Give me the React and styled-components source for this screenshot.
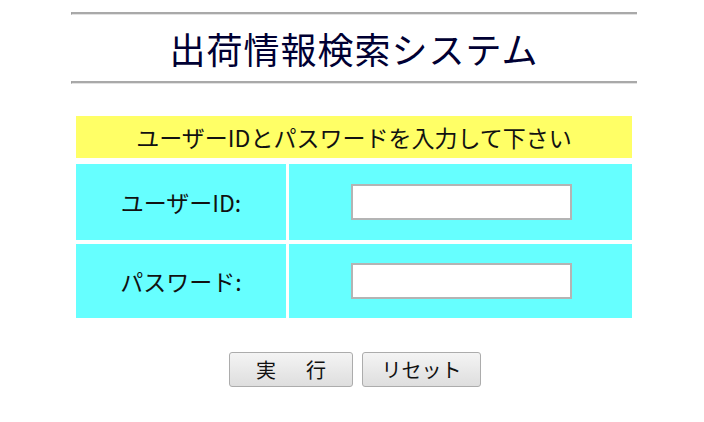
import React from 'react';
import styled, { createGlobalStyle } from "styled-components";

const GlobalStyle = createGlobalStyle`
  body {
    margin: 0;
    background: #fff;
    font-family: "Noto Sans CJK JP", "Liberation Sans", sans-serif;
  }
`;

const Page = styled.div`
  width: 566px;
  margin-left: 71px;
  padding-top: 12px;
`;

const Rule = styled.div`
  height: 0;
  border-top: 2px solid #a9a9a9;
  border-bottom: 1px solid #e2e2e2;
  border-left: 1px solid #9a9a9a;
`;

const Title = styled.h1`
  margin: 0;
  height: 66px;
  display: flex;
  align-items: center;
  justify-content: center;
  font-size: 36px;
  font-weight: normal;
  color: #000033;
  letter-spacing: 1px;
`;

const Form = styled.div`
  display: grid;
  grid-template-columns: 210px 343px;
  grid-template-rows: 44px 76px 74px;
  column-gap: 3px;
  row-gap: 4px;
  margin: 32px 0 0 5px;
  width: 556px;
`;

const Notice = styled.div`
  grid-column: 1 / 3;
  margin-bottom: 2px;
  background: #ffff66;
  display: flex;
  align-items: center;
  justify-content: center;
  font-size: 23px;
  color: #111;
`;

const Cell = styled.div`
  background: #66ffff;
  display: flex;
  align-items: center;
  justify-content: center;
  font-size: 23px;
  color: #111;
`;

const Field = styled.input`
  width: 221px;
  height: 36px;
  box-sizing: border-box;
  border: 2px solid #b4b4b4;
  background: #fff;
  outline: none;
  margin-left: 2px;
`;

const Buttons = styled.div`
  display: flex;
  justify-content: center;
  gap: 9px;
  margin-top: 34px;
  padding-left: 2px;
`;

const Button = styled.button`
  width: ${(p) => p.$w}px;
  height: 35px;
  border: 1px solid #acacac;
  border-radius: 3px;
  background: linear-gradient(#f4f4f4, #dedede);
  font-family: "Noto Sans CJK JP", sans-serif;
  font-size: 20px;
  letter-spacing: ${(p) => p.$spread || 0}px;
  text-indent: ${(p) => p.$spread || 0}px;
  color: #111;
  padding: 0;
  white-space: pre;
`;

function App() {
  return (
    <>
      <GlobalStyle />
      <Page>
        <Rule />
        <Title>出荷情報検索システム</Title>
        <Rule />

        <Form>
          <Notice>ユーザーIDとパスワードを入力して下さい</Notice>
          <Cell>ユーザーID:</Cell>
          <Cell><Field type="text" /></Cell>
          <Cell>パスワード:</Cell>
          <Cell><Field type="password" /></Cell>
        </Form>

        <Buttons>
          <Button $w={124} $spread={5}>実　行</Button>
          <Button $w={119}>リセット</Button>
        </Buttons>
      </Page>
    </>
  );
}

export default App;
